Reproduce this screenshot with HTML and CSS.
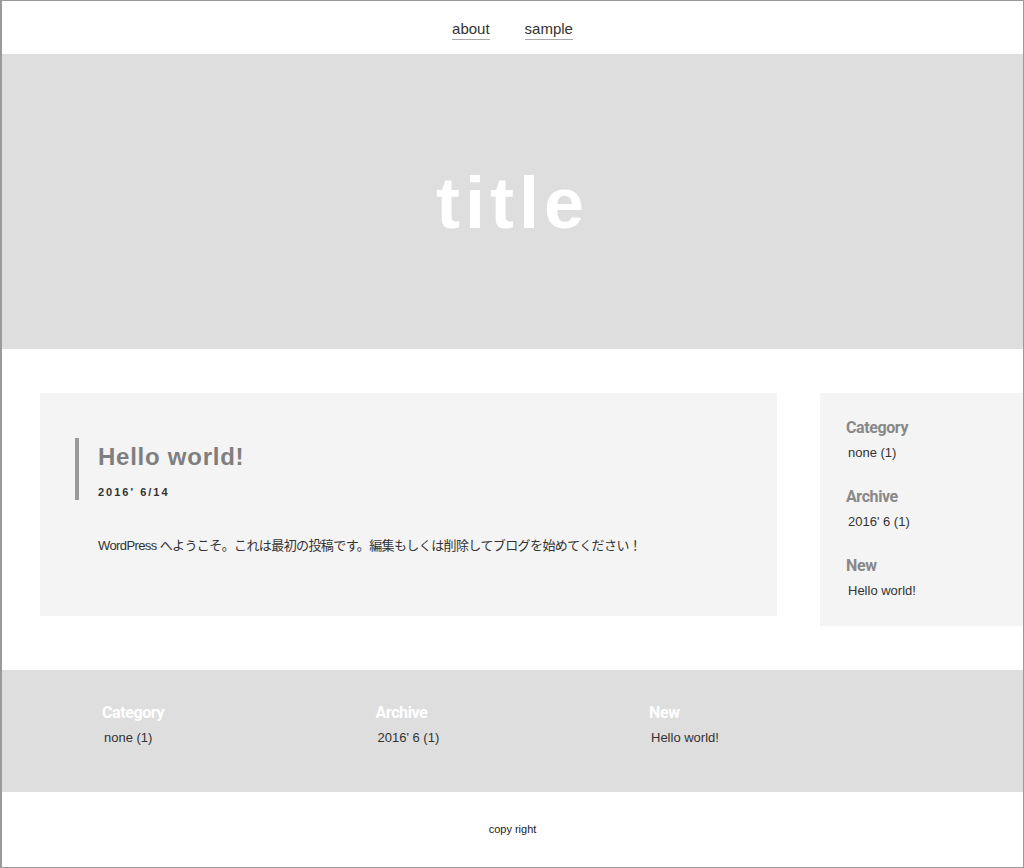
FILE: index.html
```html
<!DOCTYPE html>
<html lang="ja">
<head>
<meta charset="utf-8">
<title>title</title>
<link rel="stylesheet" href="styles.css">
</head>
<body>
<div class="page">
  <header class="site-header">
    <nav class="nav">
      <a class="nav-link" href="#">about</a>
      <a class="nav-link" href="#">sample</a>
    </nav>
  </header>
  <section class="hero">
    <h1 class="hero-title">title</h1>
  </section>
  <main class="main">
    <article class="post">
      <div class="post-head">
        <h2 class="post-title">Hello world!</h2>
        <div class="post-date">2016' 6/14</div>
      </div>
      <p class="post-body">WordPress へようこそ。これは最初の投稿です。編集もしくは削除してブログを始めてください！</p>
    </article>
    <aside class="sidebar">
      <div class="widget">
        <h3 class="widget-title">Category</h3>
        <div class="widget-item">none (1)</div>
      </div>
      <div class="widget">
        <h3 class="widget-title">Archive</h3>
        <div class="widget-item">2016' 6 (1)</div>
      </div>
      <div class="widget">
        <h3 class="widget-title">New</h3>
        <div class="widget-item">Hello world!</div>
      </div>
    </aside>
  </main>
  <footer class="footer">
    <div class="footer-cols">
      <div class="footer-col">
        <h3 class="footer-title">Category</h3>
        <div class="footer-item">none (1)</div>
      </div>
      <div class="footer-col">
        <h3 class="footer-title">Archive</h3>
        <div class="footer-item">2016' 6 (1)</div>
      </div>
      <div class="footer-col">
        <h3 class="footer-title">New</h3>
        <div class="footer-item">Hello world!</div>
      </div>
    </div>
  </footer>
  <div class="copyright">copy right</div>
</div>
</body>
</html>
```

FILE: styles.css
```css
* { box-sizing: border-box; }
html, body { margin: 0; padding: 0; background: #fff; }
body {
  font-family: "Liberation Sans", "Noto Sans CJK JP", sans-serif;
  color: #333;
}
.page {
  width: 1024px;
  height: 868px;
  border: 1px solid #9a9a9a;
  border-left-width: 2px;
  overflow: hidden;
}
.site-header {
  height: 53px;
  padding-top: 19px;
}
.nav {
  display: flex;
  justify-content: center;
  gap: 35px;
}
.nav-link {
  font-size: 15px;
  line-height: 18px;
  color: #333;
  text-decoration: none;
  padding-bottom: 1px;
  border-bottom: 1px solid #aaa;
}
.hero {
  height: 295px;
  background: #dedede;
  display: flex;
  align-items: center;
  justify-content: center;
}
.hero-title {
  margin: 0;
  font-size: 72px;
  line-height: 72px;
  font-weight: bold;
  color: #fff;
  letter-spacing: 5px;
  padding-top: 3px;
}
.main {
  display: grid;
  grid-template-columns: 737px 1fr;
  column-gap: 43px;
  align-items: start;
  padding: 44px 0 44px 38px;
  height: 321px;
}
.post {
  background: #f4f4f4;
  height: 223px;
  padding: 45px 35px 0 35px;
}
.post-head {
  border-left: 4px solid #999;
  padding-left: 19px;
}
.post-title {
  margin: 0;
  padding-top: 1px;
  font-size: 24px;
  line-height: 36px;
  font-weight: bold;
  color: #7f7f7f;
  letter-spacing: 0.75px;
}
.post-date {
  margin-top: 9px;
  font-size: 11px;
  line-height: 16px;
  font-weight: bold;
  letter-spacing: 2px;
  color: #333;
}
.post-body {
  margin: 36px 0 0 23px;
  font-size: 13px;
  line-height: 20px;
  color: #333;
  letter-spacing: -0.6px;
}
.sidebar {
  background: #f4f4f4;
  height: 233px;
  padding: 25px 0 0 26px;
}
.widget + .widget { margin-top: 25px; }
.widget-title, .footer-title {
  margin: 0;
  font-family: "Roboto", "Liberation Sans", sans-serif;
  font-size: 16px;
  line-height: 20px;
  font-weight: bold;
  letter-spacing: -0.4px;
}
.widget-title { color: #888; }
.widget-item, .footer-item {
  margin-top: 6px;
  padding-left: 2px;
  font-size: 13px;
  line-height: 18px;
  color: #333;
}
.footer {
  height: 122px;
  background: #dedede;
  padding: 33px 0 0 100px;
}
.footer-cols {
  display: grid;
  grid-template-columns: repeat(3, 273.5px);
}
.footer-title { color: #fff; }
.copyright {
  padding-top: 30px;
  text-align: center;
  font-size: 11px;
  line-height: 14px;
  color: #222;
}
```
